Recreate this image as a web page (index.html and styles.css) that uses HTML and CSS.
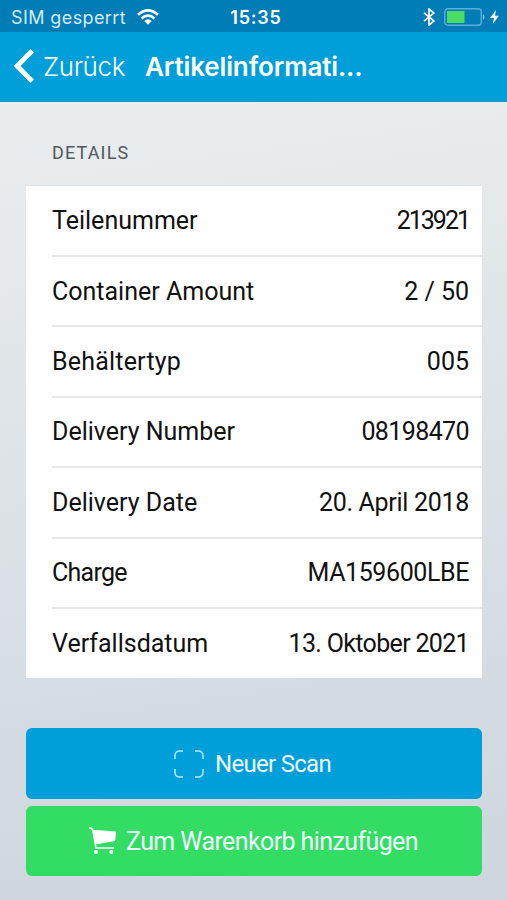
FILE: index.html
```html
<!DOCTYPE html>
<html lang="de">
<head>
<meta charset="utf-8">
<title>Artikelinformationen</title>
<link rel="stylesheet" href="styles.css">
</head>
<body>
<header class="top">
  <div class="status">
    <div class="carrier"><span class="carrier-name">SIM gesperrt</span>
      <svg class="wifi" viewBox="0 0 22 16" fill="none" stroke="#fff" stroke-width="2.8"><path d="M1 5.7Q11-3 21 5.7M4.5 9.5Q11 3.8 17.5 9.5"/><path d="M7.2 12Q11 8.7 14.8 12L11 15.8Z" fill="#fff" stroke="none"/></svg>
    </div>
    <span class="time">15:35</span>
    <div class="power">
      <svg class="bluetooth" viewBox="0 0 12 18" fill="none" stroke="#fff" stroke-width="1.7"><path d="M1 4.8L11 13L6 17V1L11 5L1 13.2"/></svg>
      <svg class="battery" viewBox="0 0 42 18"><rect x=".8" y=".8" width="36.5" height="16.4" rx="3" fill="none" stroke="#62add8" stroke-width="1.4"/><rect x="3" y="3" width="17.5" height="12" fill="#4cdc64"/><path d="M39 6Q42 9 39 12Z" fill="#8ac1e0"/></svg>
      <svg class="bolt" viewBox="0 0 9 14" fill="#fff"><path d="M6 0L0 8H4L2.7 14L9 5.8H5Z"/></svg>
    </div>
  </div>
  <nav class="nav">
    <svg class="chevron" viewBox="0 0 20 34" fill="none" stroke="#fff" stroke-width="4.8"><path d="M18.2 1.8L3.2 17L18.2 32.2"/></svg>
    <span class="back">Zurück</span>
    <h1 class="title">Artikelinformati...</h1>
  </nav>
</header>
<main class="content">
  <h2 class="section">DETAILS</h2>
  <dl class="card">
    <div class="row"><dt>Teilenummer</dt><dd class="part-number">213921</dd></div>
    <div class="row"><dt>Container Amount</dt><dd>2 / 50</dd></div>
    <div class="row"><dt class="container-type">Behältertyp</dt><dd>005</dd></div>
    <div class="row"><dt>Delivery Number</dt><dd class="delivery-number">08198470</dd></div>
    <div class="row"><dt>Delivery Date</dt><dd class="delivery-date">20. April 2018</dd></div>
    <div class="row"><dt class="charge-label">Charge</dt><dd class="charge">MA159600LBE</dd></div>
    <div class="row"><dt>Verfallsdatum</dt><dd class="expiry">13. Oktober 2021</dd></div>
  </dl>
  <div class="actions">
    <button class="button scan"><svg class="scan-icon" viewBox="0 0 30 28" fill="none" stroke="#b5e3f5" stroke-width="1.5"><path d="M1 9V6Q1 1 6 1H9M21 1H24Q29 1 29 6V9M29 19V22Q29 27 24 27H21M9 27H6Q1 27 1 22V19"/></svg><span class="scan-label">Neuer Scan</span></button>
    <button class="button cart"><svg class="cart-icon" viewBox="0 0 28 28"><path d="M0 .7Q3 .7 3.7 3L7 21H25" fill="none" stroke="#fff" stroke-width="1.4"/><path d="M3.5 2.7L27 4.5L26.2 14L6 17.5Z" fill="#fff"/><circle cx="7" cy="25" r="2" fill="#fff"/><circle cx="22.3" cy="25" r="2" fill="#fff"/></svg><span class="cart-label">Zum Warenkorb hinzufügen</span></button>
  </div>
</main>
</body>
</html>
```

FILE: styles.css
```css
* { box-sizing: border-box; }
body {
  margin: 0;
  height: 900px;
  overflow: hidden;
  font-family: Roboto, sans-serif;
  background: linear-gradient(172deg, #e9edef 12%, #dfe4e8 45%, #d5dce1 76%, #ced6de 100%);
}
.top { height: 102px; background: #009fda; color: #fff; font-family: Inter, sans-serif; border-bottom: 1px solid #2495bf; }
.status { height: 32px; background: #007cb7; display: grid; grid-template-columns: 1fr auto 1fr; align-items: center; padding: 2px 8px 0 11px; font-size: 18px; }
.carrier, .power { display: flex; align-items: center; }
.carrier { gap: 11px; color: #d5ebf6; }
.carrier-name { letter-spacing: .4px; }
.wifi { width: 22px; height: 16px; }
.time { font-weight: 600; letter-spacing: .8px; padding-left: 2px; }
.power { justify-content: flex-end; }
.bluetooth { width: 12px; height: 18px; margin-right: 9px; }
.battery { width: 42px; height: 18px; margin-right: 4px; }
.bolt { width: 9px; height: 14px; }
.nav { height: 69px; display: flex; align-items: center; padding: 0 0 1px 14px; }
.chevron { width: 20px; height: 34px; margin-right: 9px; margin-top: -1px; }
.back { font-size: 26px; font-weight: 300; letter-spacing: -.4px; width: 102px; white-space: nowrap; }
.title { margin: 0; font-size: 26px; font-weight: 600; letter-spacing: -.13px; white-space: nowrap; }
.content { padding: 0 25px 0 26px; }
.section { margin: 0; height: 83px; padding: 40px 0 0 26px; font-size: 18px; line-height: 22px; font-weight: 400; letter-spacing: 1.15px; color: #54585a; }
.card { margin: 0; height: 493px; background: #fff; border-top: 1px solid #e1e3e4; }
.row { height: 70.4px; margin-left: 26px; padding-right: 13px; display: flex; justify-content: space-between; align-items: center; border-bottom: 2px solid #e6e7e8; font-size: 25px; color: #111; white-space: nowrap; }
.row:first-child { height: 71px; padding-bottom: 1px; }
.row:last-child { height: 69.4px; border-bottom: 0; }
.row dd { margin: 0; }
.part-number { letter-spacing: -2px; }
.container-type { letter-spacing: .2px; }
.delivery-number { letter-spacing: -.6px; }
.delivery-date { letter-spacing: -.3px; }
.charge-label { letter-spacing: -.75px; }
.charge { letter-spacing: -.4px; }
.expiry { letter-spacing: -.67px; }
.actions { padding-top: 50px; display: grid; gap: 7px; }
.button { height: 71px; border: 0; border-radius: 6px; padding: 0; display: flex; align-items: center; justify-content: flex-start; color: #eefaff; font: 400 25px Roboto, sans-serif; white-space: nowrap; }
.scan { background: #009fda; padding-left: 148px; }
.cart { height: 70px; background: #33dd63; padding-left: 63px; }
.scan-label { font-size: 24px; letter-spacing: -.7px; }
.cart-label { letter-spacing: -.6px; }
.scan-icon { width: 30px; height: 28px; margin-right: 11px; }
.cart-icon { width: 28px; height: 28px; margin-right: 9px; }
```
